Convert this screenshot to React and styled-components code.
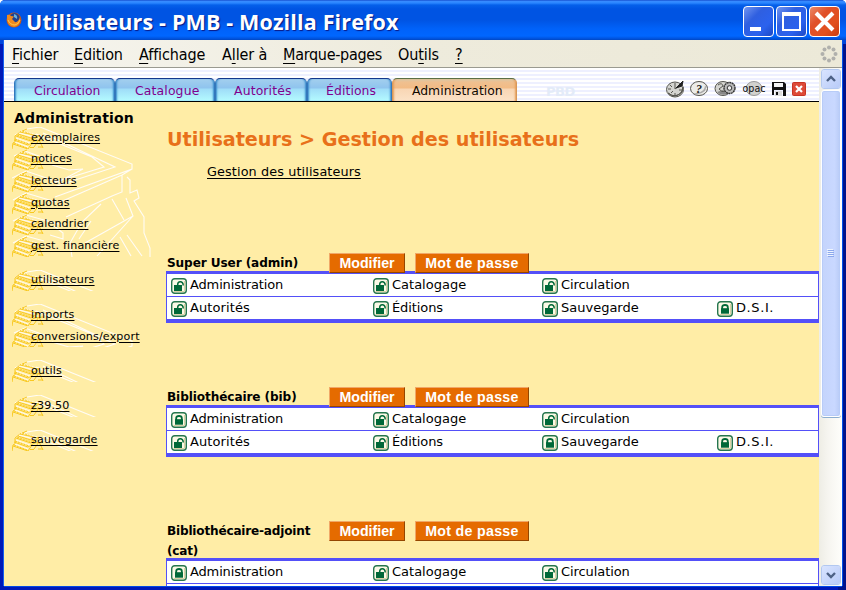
import React from "react";
import styled, { createGlobalStyle } from "styled-components";

const Global = createGlobalStyle`
  * { box-sizing: border-box; }
  body { margin: 0; overflow: hidden; }
`;

const Window = styled.div`
  width: 846px;
  height: 590px;
  display: flex;
  flex-direction: column;
  overflow: hidden;
  background: #0046dc;
  border-radius: 5px 5px 0 0;
  font-family: "DejaVu Sans", sans-serif;
  color: #000;
`;

const TitleBar = styled.header`
  height: 40px;
  flex: none;
  display: flex;
  align-items: center;
  padding: 3px 6px 0 6px;
  background: linear-gradient(#0a3cc0 0, #3a8cff 1px, #2a86ff 3px, #0560ea 5px, #0054e3 9px, #0054e3 20px, #0062fa 29px, #0066ff 36px, #0050d8 39px, #0046c0 40px);
  > svg { margin-top: -4px; }
`;

const Title = styled.h1`
  flex: 1;
  margin: 0 0 0 4px;
  font: bold 21.5px/30px "Open Sans", sans-serif;
  letter-spacing: 0.15px;
  color: #fff;
  text-shadow: 1px 1px 1px #0a1883;
  white-space: nowrap;
`;

const Controls = styled.div`
  display: flex;
  gap: 2px;
`;

const ControlButton = styled.button`
  width: 31px;
  height: 31px;
  padding: 0;
  border: 1px solid #fff;
  border-radius: 4px;
  background: ${(p) =>
    p.$close
      ? "linear-gradient(135deg, #ec8a68, #e0512a 35%, #e2501e 70%, #c83c10)"
      : "linear-gradient(135deg, #7296f0, #2f5fe0 35%, #2b62ee 70%, #1c48c4)"};
  svg { display: block; }
`;

const Frame = styled.div`
  flex: 1;
  min-height: 0;
  display: flex;
  flex-direction: column;
  margin: 0 4px 4px;
  background: #fff;
  box-shadow: -1px 0 #1560f0, 1px 0 #0050e8, 0 1px #0048e8, -4px 4px #0019b8, 4px 4px #00138c;
`;

const MenuBar = styled.nav`
  height: 28px;
  flex: none;
  display: flex;
  align-items: center;
  padding: 1px 4px 0 8px;
  border-bottom: 1px solid #9a9a90;
  background: linear-gradient(90deg, #f6f5ef, #eeebdc 50%, #ece9d8);
  font: 16px "DejaVu Sans Condensed", "DejaVu Sans", sans-serif;
  font-stretch: condensed;
`;

const MenuItem = styled.span`
  width: ${(p) => p.$w}px;
  letter-spacing: ${(p) => p.$ls}px;
  white-space: nowrap;
  u { text-underline-offset: 3px; text-decoration-thickness: 1px; }
`;

const Spacer = styled.span`
  flex: 1;
`;

const Body = styled.div`
  flex: 1;
  min-height: 0;
  display: flex;
`;

const Page = styled.div`
  width: 815px;
  display: flex;
  flex-direction: column;
  background: #ffeda6;
`;

const PageHeader = styled.div`
  height: 34px;
  flex: none;
  display: flex;
  align-items: flex-end;
  padding-left: 10px;
  border-bottom: 1px solid #000;
  background: repeating-linear-gradient(#fff 0, #fff 2px, #eef0ff 2px, #eef0ff 4px);
`;

const Tab = styled.a`
  width: ${(p) => p.$w}px;
  height: 23px;
  padding: 1px 0 0 ${(p) => p.$pad}px;
  border: solid;
  border-width: 1px 1px 0;
  border-color: ${(p) => (p.$active ? "#5c7048 #d89858" : "#14388c #3478bc")};
  border-radius: 5px 5px 0 0;
  font-size: 12.4px;
  line-height: 22px;
  white-space: nowrap;
  letter-spacing: ${(p) => p.$ls || 0}px;
  color: ${(p) => (p.$active ? "#100800" : "#80008c")};
  background: ${(p) =>
    p.$active
      ? "linear-gradient(#d8c8a8, #efc090 3px, #f2bb85 9px, #f8d6b4 10px, #fbe2c6)"
      : "linear-gradient(#a4d0ee, #9ccbee 3px, #8fc4ee 9px, #9fddf8 10px, #b4fbff)"};
  box-shadow: inset 2px 0 2px -1px ${(p) => (p.$active ? "#e49c58" : "#3a8ccc")},
    inset -2px 0 2px -1px ${(p) => (p.$active ? "#e49c58" : "#3a8ccc")};
`;

const Ghost = styled.span`
  margin-left: 29px;
  align-self: center;
  padding-top: 13px;
  font: bold 13px "DejaVu Sans", sans-serif;
  letter-spacing: -0.5px;
  color: #e3ebf8;
`;

const Tools = styled.div`
  display: flex;
  align-items: center;
  margin-right: 12px;
  height: 24px;
  svg { display: block; }
`;

const Content = styled.div`
  flex: 1;
  min-height: 0;
  display: flex;
  overflow: hidden;
`;

const Sidebar = styled.aside`
  width: 162px;
  flex: none;
  padding: 5px 0 0 8px;
`;

const SideTitle = styled.h2`
  margin: 0 0 0 2px;
  height: 20px;
  font-size: 14px;
  line-height: 22px;
  letter-spacing: 0.18px;
  white-space: nowrap;
`;

const Group = styled.ul`
  position: relative;
  margin: 0 0 13px;
  padding: 0;
  list-style: none;
  overflow: hidden;
`;

const Backdrop = styled.svg`
  position: absolute;
  left: 0;
  top: 0;
  fill: none;
  stroke: #fffcf6;
  stroke-width: 1.1;
`;

const SideItem = styled.li`
  position: relative;
  display: flex;
  align-items: center;
  height: 21.6px;
`;

const Books = styled.svg`
  flex: none;
  margin-right: -13px;
  fill: none;
  stroke: #f8c820;
  stroke-width: 1;
`;

const SideLink = styled.a`
  position: relative;
  font-size: 11.1px;
  line-height: 14px;
  letter-spacing: 0.15px;
  text-decoration: underline;
  text-underline-offset: 2px;
`;

const Main = styled.main`
  flex: 1;
  min-width: 0;
  display: flex;
  flex-direction: column;
`;

const Heading = styled.h2`
  margin: 25px 0 0 1px;
  font-size: 19.2px;
  line-height: 26px;
  letter-spacing: -0.02px;
  color: #e8701a;
  white-space: nowrap;
`;

const SubLink = styled.a`
  flex: none;
  align-self: flex-start;
  margin: 9px 0 71px 41px;
  height: 20px;
  font-size: 12.8px;
  line-height: 20px;
  letter-spacing: 0.12px;
  text-decoration: underline;
  text-underline-offset: 2px;
`;

const UserBlock = styled.section`
  flex: none;
  margin-bottom: 64px;
`;

const UserHead = styled.div`
  display: flex;
  align-items: flex-start;
  margin-bottom: ${(p) => (p.$tall ? -3 : -2)}px;
`;

const UserName = styled.div`
  width: 163px;
  padding: 0 0 0 1px;
  min-height: 20px;
  font-size: 12.1px;
  font-weight: bold;
  line-height: 20px;
  letter-spacing: ${(p) => (p.$tight ? -0.2 : -0.1)}px;
`;

const ActionButton = styled.button`
  position: relative;
  z-index: 1;
  width: ${(p) => p.$w}px;
  height: 20px;
  margin-right: 10px;
  padding: 0;
  border: 1px solid;
  border-color: #f0a868 #944600 #944600 #f0a868;
  background: #e56b00;
  color: #fff;
  font: bold 14.2px/18px "Liberation Sans", sans-serif;
  letter-spacing: ${(p) => p.$ls || 0}px;
`;

const Rights = styled.div`
  border: solid #5450f8;
  border-width: 3px 1px 4px;
  background: #fff;
`;

const RightsRow = styled.div`
  height: ${(p) => (p.$first ? 23 : 22)}px;
  display: grid;
  grid-template-columns: 202px 169px 175px 1fr;
  align-items: center;
  padding-left: 4px;
  border-bottom: ${(p) => (p.$first ? "1px solid #5450f8" : "0")};
`;

const Right = styled.span`
  display: flex;
  align-items: center;
  gap: 3px;
  font-size: 13px;
  line-height: 20px;
  letter-spacing: ${(p) => p.$ls}px;
  white-space: nowrap;
  svg { margin-top: 1px; }
`;

const Scrollbar = styled.div`
  width: 23px;
  display: flex;
  flex-direction: column;
  padding: 1px 1px 1px 2px;
  background: linear-gradient(90deg, #eeede5, #f6f5f0 40%, #fefefb);
`;

const ScrollButton = styled.div`
  height: 20px;
  flex: none;
  display: grid;
  place-items: center;
  border: 1px solid #fff;
  outline: 1px solid #b2c8f0;
  outline-offset: -1px;
  border-radius: 3px;
  background: linear-gradient(135deg, #d9e4ff, #b8cbf8);
`;

const Thumb = styled.div`
  height: 327px;
  flex: none;
  display: grid;
  place-items: center;
  margin-top: 1px;
  border: 1px solid #fff;
  box-shadow: inset 0 0 0 1px #b8ccf8, 0 1px #8caed0;
  border-radius: 3px;
  background: linear-gradient(90deg, #c4d4fc, #c9d8ff 70%, #b8cbf6);
`;

function Lock({ open }) {
  return (
    <svg width="16" height="16" viewBox="0 0 16 16">
      <rect x=".7" y=".7" width="14.6" height="14.6" rx="3" fill="#fbf9e6" stroke="#26764e" strokeWidth="1.4" />
      <path d="M2.5 13.5H13.5V3" fill="none" stroke="#d8d2a4" />
      {open ? (
        <>
          <path d="M3 7H11V13H3Z" fill="#006838" />
          <path d="M6.7 8V6.5Q6.7 3.7 9.2 3.7Q12.2 3.7 12.2 7.5" fill="none" stroke="#006838" strokeWidth="1.5" />
        </>
      ) : (
        <>
          <path d="M4 7.2H12V12.7H4Z" fill="#006838" />
          <path d="M5.2 8V6Q5.2 4 8 4Q10.8 4 10.8 6V8" fill="none" stroke="#006838" strokeWidth="1.8" />
        </>
      )}
    </svg>
  );
}

function BooksDrawing() {
  return (
    <Books width="32" height="22" viewBox="0 0 32 22">
      <path d="M3 9L8 5L15 2M2 13L16 18M4 9L19 14M1 17L16 22M0 22L1 16L4 14M3 14V9M8 5L27 9M6 7L22 12M19 14L27 9M16 18L24 13M16 22L20 16M18 20.5H22M22 20L27 13L31 21M22 14L31 13M26 20H31" />
      <path d="M4 11L18 16M9 4L25 8M3 15L16 20M7 6L22 10" stroke="#fffaf0" />
      <path d="M5 8L20 13M3 12L17 17M10 4L25 9M2 16L15 21" strokeDasharray="2 1" />
    </Books>
  );
}

function Building() {
  return (
    <Backdrop width="142" height="130" viewBox="0 0 142 130">
      <path d="M3 8L15 2L28 0L120 37V42L43 70M31 6L103 40L42 60M24 7L80 30L92 40L40 56M40 38L57 43L71 42L48 54M120 42L110 48L46 76M110 48V65L100 69L54 90M115 50L118 53V66L125 63L127 71L122 74L132 90V106L138 121V130M114 71L121 89L73 116M121 89L85 129M100 72L112 93M89 77L70 95L58 116L60 130M42 99L51 106V112L38 108M79 94L67 112M115 108L130 129M108 110L119 129" />
      <path d="M2 29L13 24L35 32M0 51L14 44L52 57M1 73L14 66L44 75M1 94L14 88L50 98M1 116L14 109L32 114" />
    </Backdrop>
  );
}

const menu = [
  ["", "F", "ichier", 62, -0.1],
  ["", "E", "dition", 65, -0.15],
  ["", "A", "ffichage", 83, -0.1],
  ["A", "l", "ler à", 61, -0.1],
  ["", "M", "arque-pages", 115, -0.3],
  ["Ou", "t", "ils", 57, -0.1],
  ["", "?", "", 20, 0],
];

const sideGroups = [
  ["exemplaires", "notices", "lecteurs", "quotas", "calendrier", "gest. financière"],
  ["utilisateurs"],
  ["imports", "conversions/export"],
  ["outils"],
  ["z39.50"],
  ["sauvegarde"],
];

const rights = [
  ["Administration", "Catalogage", "Circulation"],
  ["Autorités", "Éditions", "Sauvegarde", "D.S.I."],
];

const spacing = { Administration: -0.15, Autorités: 0.1, "D.S.I.": 0.6, Éditions: -0.1, Circulation: -0.08 };

const users = [
  { name: "Super User (admin)", locked: ["D.S.I."] },
  { name: "Bibliothécaire (bib)", locked: ["Administration", "Sauvegarde", "D.S.I."] },
  { name: "Bibliothécaire-adjoint (cat)", locked: ["Administration", "D.S.I."] },
];

function ToolIcons() {
  return (
    <Tools>
      <svg width="142" height="20" viewBox="0 0 142 20">
        <g fill="#d4d4d0" stroke="#55554f" strokeWidth="1">
          <ellipse cx="10" cy="10.5" rx="8.5" ry="7.5" />
          <path d="M3 14Q10 20 17 13L18 8Q17 17 8 17Z" fill="#777" />
          <path d="M10 4V10L17 4M3 10H6M10 14V17M14 11H17M5 6L7 8M6 14L8 12" fill="none" />
          <path d="M11 9L18 2L17 7Z" fill="#222" stroke="#222" />
          <ellipse cx="34" cy="9.5" rx="8.5" ry="7" fill="#ecece8" />
          <path d="M28 14Q34 17 40 12Q42 8 40 6Q40 14 28 14Z" fill="#aaa" stroke="none" />
          <ellipse cx="58" cy="9.5" rx="8" ry="7" />
          <path d="M52 13Q56 17 62 15L58 11Z" fill="#888" stroke="none" />
          <circle cx="64.5" cy="9" r="5.5" fill="#bbb" stroke="#333" strokeWidth="1.4" strokeDasharray="2 .5" />
          <circle cx="64.5" cy="9" r="2.3" fill="#eee" stroke="#333" />
          <path d="M53 6Q57 3 58 7L54 10Q57 14 60 12" fill="none" />
          <ellipse cx="89" cy="9.5" rx="8" ry="7" fill="#d2d2ce" stroke="#999" />
        </g>
        <text x="31" y="13.5" fontFamily="Liberation Serif" fontSize="12" fontWeight="bold" fontStyle="italic" fill="#222">?</text>
        <text x="77.5" y="13" fontFamily="DejaVu Sans" fontSize="11" textLength="23" lengthAdjust="spacingAndGlyphs" fill="#111">opac</text>
        <path d="M107 3H119L121 5V17H118V11H109V16H107Z" fill="#111" />
        <path d="M109 4H118V8H109Z" fill="#f4f4f4" />
        <path d="M110 12H117V17H110Z" fill="#ddd" />
        <path d="M111 13H113V16H111Z" fill="#111" />
        <rect x="127.5" y="3.5" width="13" height="13" rx="1" fill="#dd4a38" stroke="#c83424" />
        <path d="M131 7L137 13M137 7L131 13" stroke="#fff" strokeWidth="2.2" />
      </svg>
    </Tools>
  );
}

export default function App() {
  return (
    <>
      <Global />
      <Window>
        <TitleBar>
          <svg width="16" height="16" viewBox="0 0 16 16">
            <circle cx="8" cy="8" r="7.5" fill="#c85a18" />
            <circle cx="8.5" cy="6.5" r="5.4" fill="#20408c" />
            <path d="M8 2Q12 3 11 7L8 5Z" fill="#68b4e0" />
            <path d="M1 3Q3 2 5 4L8 4.5L6 7L9 10Q12 11 14 5Q15 14 8 15Q0 14 1 3Z" fill="#ee8a20" />
            <path d="M2 8Q4 13 9 13Q13 12 14 8" fill="none" stroke="#ffc848" />
          </svg>
          <Title>Utilisateurs - PMB - Mozilla Firefox</Title>
          <Controls>
            <ControlButton>
              <svg width="29" height="29"><path d="M6 20H17V24H6Z" fill="#fff" /></svg>
            </ControlButton>
            <ControlButton>
              <svg width="29" height="29"><path d="M5 5H24V24H5ZM7 9V22H22V9Z" fill="#fff" fillRule="evenodd" /></svg>
            </ControlButton>
            <ControlButton $close>
              <svg width="29" height="29"><path d="M6 6L23 23M23 6L6 23" stroke="#fff" strokeWidth="4" /></svg>
            </ControlButton>
          </Controls>
        </TitleBar>
        <Frame>
          <MenuBar>
            {menu.map(([a, b, c, w, ls]) => (
              <MenuItem key={a + b + c} $w={w} $ls={ls}>{a}<u>{b}</u>{c}</MenuItem>
            ))}
            <Spacer />
            <svg width="18" height="18" viewBox="0 0 18 18" fill="#b0b0ac">
              {[[9, 2.5], [13.5, 4.5], [15.5, 9], [13.5, 13.5], [9, 15.5], [4.5, 13.5], [2.5, 9], [4.5, 4.5]].map(([x, y]) => (
                <circle key={`${x}-${y}`} cx={x} cy={y} r="2" />
              ))}
            </svg>
          </MenuBar>
          <Body>
            <Page>
              <PageHeader>
                <Tab $w={101} $pad={19}>Circulation</Tab>
                <Tab $w={100} $pad={19} $ls={0.15}>Catalogue</Tab>
                <Tab $w={92} $pad={18} $ls={0.15}>Autorités</Tab>
                <Tab $w={85} $pad={18} $ls={0.1}>Éditions</Tab>
                <Tab $w={125} $pad={19} $active>Administration</Tab>
                <Ghost>PBD</Ghost>
                <Spacer />
                <ToolIcons />
              </PageHeader>
              <Content>
                <Sidebar>
                  <SideTitle>Administration</SideTitle>
                  {sideGroups.map((items) => (
                    <Group key={items[0]}>
                      <Building />
                      {items.map((item) => (
                        <SideItem key={item}>
                          <BooksDrawing />
                          <SideLink>{item}</SideLink>
                        </SideItem>
                      ))}
                    </Group>
                  ))}
                </Sidebar>
                <Main>
                  <Heading>Utilisateurs &gt; Gestion des utilisateurs</Heading>
                  <SubLink>Gestion des utilisateurs</SubLink>
                  {users.map((user) => (
                    <UserBlock key={user.name}>
                      <UserHead $tall={user.name.length > 20}>
                        <UserName $tight={user.name.length > 20}>{user.name}</UserName>
                        <ActionButton $w={76}>Modifier</ActionButton>
                        <ActionButton $w={114} $ls={0.3}>Mot de passe</ActionButton>
                      </UserHead>
                      <Rights>
                        {rights.map((row, i) => (
                          <RightsRow key={row[0]} $first={i === 0}>
                            {row.map((label) => (
                              <Right key={label} $ls={spacing[label] || 0}>
                                <Lock open={!user.locked.includes(label)} />
                                {label}
                              </Right>
                            ))}
                          </RightsRow>
                        ))}
                      </Rights>
                    </UserBlock>
                  ))}
                </Main>
              </Content>
            </Page>
            <Scrollbar>
              <ScrollButton>
                <svg width="12" height="8"><path d="M2 6L6 2L10 6" fill="none" stroke="#4d6185" strokeWidth="2.4" /></svg>
              </ScrollButton>
              <Thumb>
                <svg width="8" height="9"><path d="M1 1.5H7M1 3.5H7M1 5.5H7M1 7.5H7" stroke="#8ca8ec" /><path d="M0 .5H6M0 2.5H6M0 4.5H6M0 6.5H6" stroke="#eef4fe" /></svg>
              </Thumb>
              <Spacer />
              <ScrollButton>
                <svg width="12" height="8"><path d="M2 2L6 6L10 2" fill="none" stroke="#4d6185" strokeWidth="2.4" /></svg>
              </ScrollButton>
            </Scrollbar>
          </Body>
        </Frame>
      </Window>
    </>
  );
}
